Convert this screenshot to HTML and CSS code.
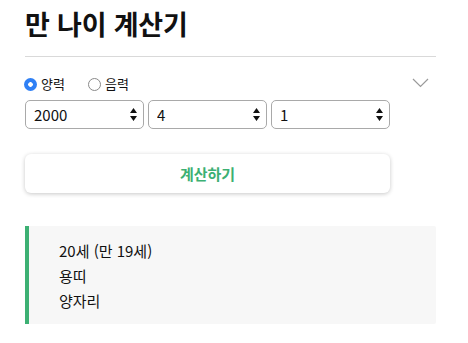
FILE: index.html
```html
<!DOCTYPE html>
<html lang="ko">
<head>
<meta charset="utf-8">
<title>만 나이 계산기</title>
<link rel="stylesheet" href="styles.css">
</head>
<body>
<div class="page">
  <h1 class="title">만 나이 계산기</h1>
  <hr class="divider">
  <div class="options">
    <div class="radios">
      <label class="radio"><input type="radio" name="cal" checked><span>양력</span></label>
      <label class="radio"><input type="radio" name="cal"><span>음력</span></label>
    </div>
    <svg class="chevron" width="17" height="10" viewBox="0 0 17 10"><path d="M1 1 L8.5 8.5 L16 1" fill="none" stroke="#9a9a9a" stroke-width="1.2"/></svg>
  </div>
  <div class="selects">
    <div class="select-wrap">
      <select class="select"><option>2000</option></select>
      <svg class="arrows" width="7" height="13" viewBox="0 0 7 13"><path d="M3.5 0 L7 5 L0 5 Z M0 8 L7 8 L3.5 13 Z" fill="#111"/></svg>
    </div>
    <div class="select-wrap">
      <select class="select"><option>4</option></select>
      <svg class="arrows" width="7" height="13" viewBox="0 0 7 13"><path d="M3.5 0 L7 5 L0 5 Z M0 8 L7 8 L3.5 13 Z" fill="#111"/></svg>
    </div>
    <div class="select-wrap">
      <select class="select"><option>1</option></select>
      <svg class="arrows" width="7" height="13" viewBox="0 0 7 13"><path d="M3.5 0 L7 5 L0 5 Z M0 8 L7 8 L3.5 13 Z" fill="#111"/></svg>
    </div>
  </div>
  <button class="calc">계산하기</button>
  <div class="result">
    <div class="line">20세 (만 19세)</div>
    <div class="line">용띠</div>
    <div class="line">양자리</div>
  </div>
</div>
</body>
</html>
```
FILE: styles.css
```css
html, body {
  margin: 0;
  padding: 0;
  background: #fff;
}
body {
  font-family: "Noto Sans CJK KR", "Noto Sans", sans-serif;
  color: #111;
}
.page {
  width: 411px;
  padding: 7px 0 0 25px;
}
.title {
  margin: 0;
  font-size: 27px;
  font-weight: 700;
  line-height: 34px;
  letter-spacing: -0.2px;
}
.divider {
  margin: 15px 0 0 0;
  border: none;
  border-top: 1px solid #d9d9d9;
  height: 0;
}
.options {
  display: flex;
  justify-content: space-between;
  align-items: center;
  margin-top: 19px;
  height: 16px;
  padding-right: 7px;
}
.radios {
  display: flex;
  gap: 24px;
}
.radio {
  display: flex;
  align-items: center;
  gap: 4px;
  font-size: 13px;
  line-height: 16px;
}
.radio input {
  appearance: none;
  -webkit-appearance: none;
  margin: 0 0 0 -1px;
  width: 13px;
  height: 13px;
  border-radius: 50%;
  border: 1px solid #8a8a8a;
  background: #fff;
  box-sizing: border-box;
}
.radio input:checked {
  border: none;
  background: radial-gradient(circle, #fff 0 2px, #2f80f5 2.6px);
}
.chevron {
  display: block;
  margin-top: -2px;
}
.selects {
  display: flex;
  gap: 4px;
  margin-top: 8px;
}
.select-wrap {
  position: relative;
  width: 119px;
}
.select {
  appearance: none;
  -webkit-appearance: none;
  width: 119px;
  height: 29px;
  box-sizing: border-box;
  border: 1px solid #a9a9a9;
  border-radius: 5px;
  background: #fff;
  padding: 0 0 0 8px;
  font-family: "Noto Sans CJK KR", "Noto Sans", sans-serif;
  font-size: 15px;
  color: #111;
}
.arrows {
  position: absolute;
  right: 7px;
  top: 8px;
  pointer-events: none;
}
.calc {
  display: block;
  margin-top: 25px;
  width: 365px;
  height: 39px;
  border: none;
  border-radius: 6px;
  background: #fff;
  box-shadow: 0 1px 4px rgba(0, 0, 0, 0.22);
  font-family: "Noto Sans CJK KR", "Noto Sans", sans-serif;
  font-size: 15px;
  font-weight: 700;
  color: #3cb073;
}
.result {
  margin-top: 33px;
  background: #f7f7f7;
  border-left: 4px solid #3cb073;
  padding: 12px 0 11px 30px;
  border-radius: 0 2px 2px 0;
}
.line {
  font-size: 15px;
  line-height: 25px;
}
```
